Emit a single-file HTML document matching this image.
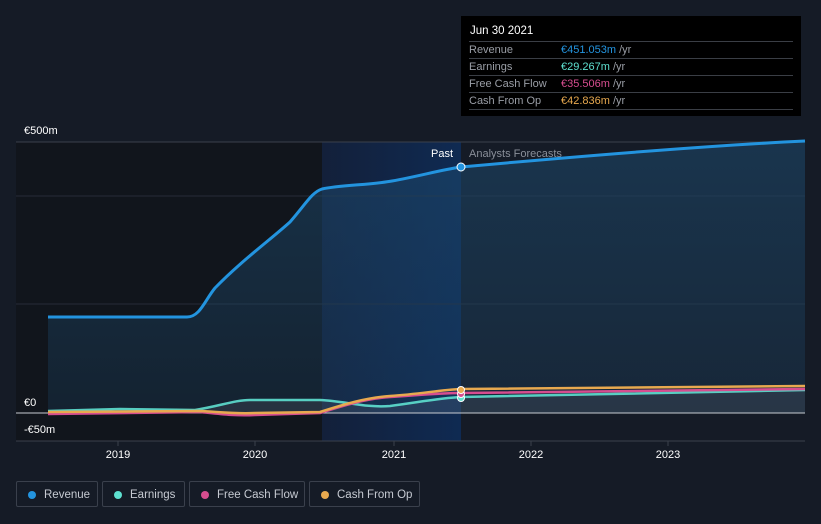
<!DOCTYPE html>
<html><head><meta charset="utf-8"><style>
body{margin:0;background:#151b26;width:821px;height:524px;overflow:hidden;font-family:"Liberation Sans",sans-serif;position:relative}
.tt{position:absolute;left:461px;top:16px;width:340px;height:100px;background:#000;color:#fff;font-size:11px}
.tt .h{position:absolute;left:9px;top:9px;font-size:11.5px}
.row{position:absolute;left:8px;width:324px;border-top:1px solid #3a3e45;height:16px;line-height:17px;color:#9a9ea6}
.row span{position:absolute;left:92px}
.lg{position:absolute;top:481px;height:26px;border:1px solid #3a404c;border-radius:2px;color:#c6cad2;font-size:11.5px;line-height:26px;box-sizing:border-box;padding-left:27px}
.lg i{position:absolute;left:11px;top:9px;width:8px;height:8px;border-radius:50%}
</style></head><body>
<svg width="821" height="524" style="position:absolute;left:0;top:0">
<defs>
<linearGradient id="hb" x1="0" x2="1"><stop offset="0" stop-color="#13203a"/><stop offset="1" stop-color="#0f2a52"/></linearGradient>
<linearGradient id="rf" x1="0" y1="0" x2="0" y2="1"><stop offset="0" stop-color="#1d4a6e" stop-opacity=".55"/><stop offset="1" stop-color="#1d4a6e" stop-opacity=".25"/></linearGradient>
</defs>
<rect x="16" y="142" width="306" height="299" fill="#11151c"/>
<rect x="322" y="142" width="139" height="299" fill="url(#hb)"/>
<line x1="16" y1="142" x2="805" y2="142" stroke="#3a404c"/>
<line x1="16" y1="196" x2="805" y2="196" stroke="#262c38"/>
<line x1="16" y1="304" x2="805" y2="304" stroke="#262c38"/>
<line x1="16" y1="441" x2="805" y2="441" stroke="#3a404c"/>
<path d="M48 317 L187 317 C200 317 205 300 215 288 C240 262 270 240 290 222 C305 205 312 192 322 189 C340 185 370 185 392 181 C420 176 440 170 461 167 C560 158 700 146 805 141 L805 413 L48 413Z" fill="url(#rf)"/>
<path d="M48 317 L187 317 C200 317 205 300 215 288 C240 262 270 240 290 222 C305 205 312 192 322 189 C340 185 370 185 392 181 C420 176 440 170 461 167 C560 158 700 146 805 141" fill="none" stroke="#2394df" stroke-width="3"/>
<path d="M48 411 L200 410 C220 406 235 400 250 400 L320 400 C350 401 370 408 390 406 C420 402 440 398 461 397 L805 390 L805 413 L48 413Z" fill="#8a8f99" fill-opacity=".15"/>
<line x1="16" y1="413" x2="805" y2="413" stroke="#c8ccd2" stroke-width="1"/>
<path d="M48 411 L120 409 L195 410 C220 406 235 400 250 400 L320 400 C345 401 365 408 390 406 C420 402 440 398 461 397 L805 390" fill="none" stroke="#5ee0d0" stroke-width="2.5" opacity=".9"/>
<path d="M48 414 L200 412 C220 414 235 416 255 415 L320 413 C345 405 365 399 390 397 C420 395 440 393 461 393 L805 389" fill="none" stroke="#d64d8f" stroke-width="2.5"/>
<path d="M48 412 L200 411 C220 412 235 414 255 413 L320 412 C345 404 365 398 390 396 C420 394 440 390 461 389 L805 386" fill="none" stroke="#e8a94f" stroke-width="2.5"/>
<circle cx="461" cy="167" r="4" fill="#2394df" stroke="#fff" stroke-width="1"/>
<circle cx="461" cy="398" r="3.5" fill="#5ee0d0" stroke="#fff" stroke-width="1"/>
<circle cx="461" cy="394" r="3.5" fill="#d64d8f" stroke="#fff" stroke-width="1"/>
<circle cx="461" cy="390" r="3.5" fill="#e8a94f" stroke="#fff" stroke-width="1"/>
<g stroke="#3a404c"><line x1="118" y1="441" x2="118" y2="446"/><line x1="255" y1="441" x2="255" y2="446"/><line x1="394" y1="441" x2="394" y2="446"/><line x1="531" y1="441" x2="531" y2="446"/><line x1="668" y1="441" x2="668" y2="446"/></g>
<g font-size="11" fill="#fff" text-anchor="middle"><text x="118" y="458">2019</text><text x="255" y="458">2020</text><text x="394" y="458">2021</text><text x="531" y="458">2022</text><text x="668" y="458">2023</text></g>
<g font-size="11" fill="#fff"><text x="24" y="134">€500m</text><text x="24" y="406">€0</text><text x="24" y="433">-€50m</text>
<text x="453" y="157" text-anchor="end">Past</text><text x="469" y="157" fill="#8a8f99">Analysts Forecasts</text></g>
</svg>
<div class="tt"><div class="h">Jun 30 2021</div>
<div class="row" style="top:25px">Revenue<span style="color:#2394df">€451.053m <b style="font-weight:normal;color:#9a9ea6">/yr</b></span></div>
<div class="row" style="top:42px">Earnings<span style="color:#5ee0d0">€29.267m <b style="font-weight:normal;color:#9a9ea6">/yr</b></span></div>
<div class="row" style="top:59px">Free Cash Flow<span style="color:#d64d8f">€35.506m <b style="font-weight:normal;color:#9a9ea6">/yr</b></span></div>
<div class="row" style="top:76px">Cash From Op<span style="color:#e8a94f">€42.836m <b style="font-weight:normal;color:#9a9ea6">/yr</b></span></div>
<div class="row" style="top:93px;height:0"></div>
</div>
<div class="lg" style="left:16px;width:82px"><i style="background:#2394df"></i>Revenue</div>
<div class="lg" style="left:102px;width:83px"><i style="background:#5ee0d0"></i>Earnings</div>
<div class="lg" style="left:189px;width:116px"><i style="background:#d64d8f"></i>Free Cash Flow</div>
<div class="lg" style="left:309px;width:111px"><i style="background:#e8a94f"></i>Cash From Op</div>
</body></html>
